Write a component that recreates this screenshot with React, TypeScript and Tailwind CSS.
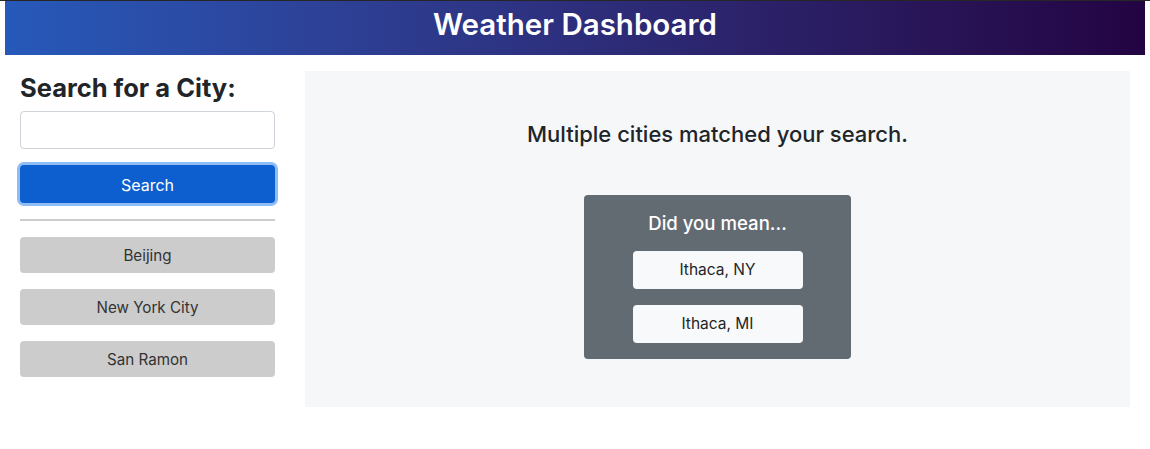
export default function App() {
  const font = { fontFamily: "Inter, 'Noto Sans', sans-serif" };
  return (
    <div className="w-[1150px] h-[449px] bg-white text-[#212529]" style={font}>
      <div className="h-px bg-[#262626]" />
      <div className="px-[5px]">
        <header className="h-[54px] bg-gradient-to-r from-[#2659ba] to-[#230443] flex items-center justify-center">
          <h1 className="text-white text-[29.5px] font-semibold leading-none -mt-[6px]">Weather Dashboard</h1>
        </header>
      </div>
      <div className="flex mt-4 pl-5 pr-5 gap-[30px]">
        <aside className="w-[255px] shrink-0">
          <h2 className="text-[25.5px] font-bold leading-[30px] mt-[2px]">Search for a City:</h2>
          <input className="mt-[8px] block w-full h-[38px] rounded-[4px] border border-[#ced4da] bg-white" />
          <button className="mt-4 w-full h-[38px] rounded-[4px] bg-[#0d5fd0] text-white text-[16px] pt-px ring-[3px] ring-[#8fbcf7] outline-none">
            Search
          </button>
          <div className="mt-4 h-[2px] bg-[#cccccc]" />
          <div className="mt-4 flex flex-col gap-4">
            {["Beijing", "New York City", "San Ramon"].map((c) => (
              <button key={c} className="w-full h-[36px] rounded-[4px] bg-[#cccccc] text-[#333] text-[15.2px] pt-[2px]">
                {c}
              </button>
            ))}
          </div>
        </aside>
        <main className="flex-1 h-[336px] bg-[#f6f7f9] flex flex-col items-center">
          <p className="mt-[49px] text-[22px] font-medium leading-[28px]">Multiple cities matched your search.</p>
          <div className="mt-[47px] w-[267px] h-[164px] rounded-[4px] bg-[#626a72] flex flex-col items-center">
            <p className="mt-[15px] text-white text-[18.6px] font-medium leading-[26px]">Did you mean...</p>
            <button className="mt-[15px] w-[170px] h-[38px] rounded-[4px] bg-[#f8f9fa] text-[#212529] text-[15.5px]">Ithaca, NY</button>
            <button className="mt-4 w-[170px] h-[38px] rounded-[4px] bg-[#f8f9fa] text-[#212529] text-[15.5px]">Ithaca, MI</button>
          </div>
        </main>
      </div>
    </div>
  );
}
